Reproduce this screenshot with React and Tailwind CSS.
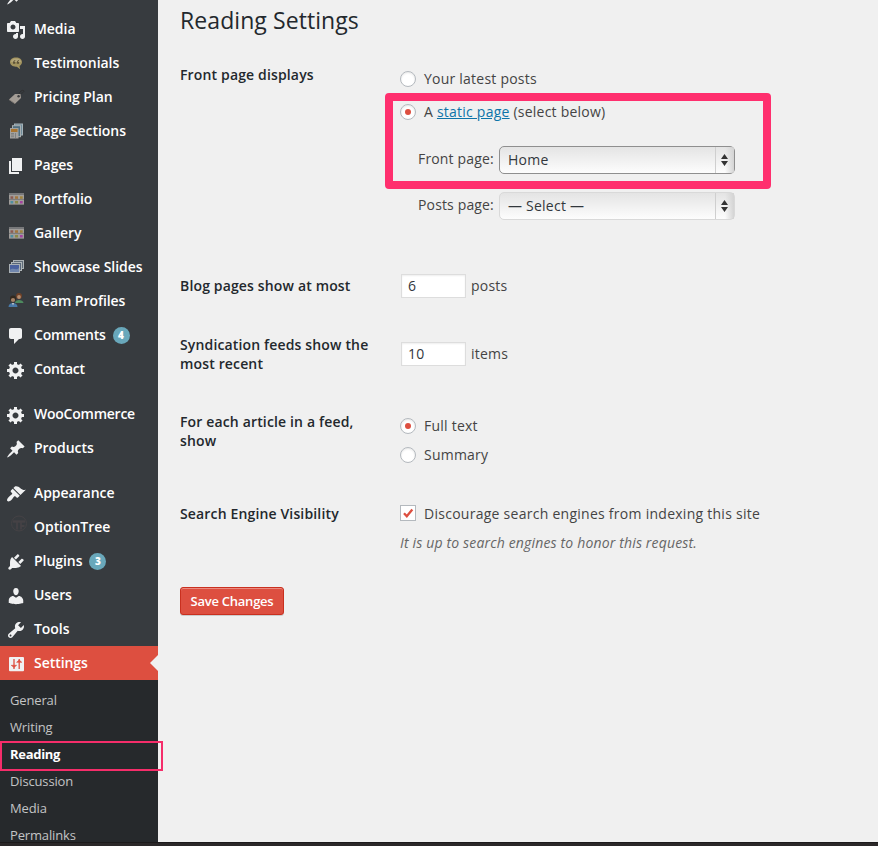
import React from "react";

const paths = {
  post: "M10.44 3.02l1.82-1.82 6.36 6.35-1.83 1.82c-1.05-.68-2.48-.57-3.41.36l-.75.75c-.92.93-1.04 2.35-.35 3.41l-1.83 1.82-2.41-2.41-2.8 2.79c-.42.42-3.38 2.71-3.8 2.29s1.86-3.39 2.28-3.81l2.79-2.79L4.1 9.36l1.83-1.82c1.05.69 2.48.57 3.4-.36l.75-.75c.93-.92 1.05-2.35.36-3.41z",
  media: "M13 11V4c0-.55-.45-1-1-1h-1.67L9 1H5L3.67 3H2c-.55 0-1 .45-1 1v7c0 .55.45 1 1 1h10c.55 0 1-.45 1-1zM7 4.5c1.38 0 2.5 1.12 2.5 2.5S8.38 9.5 7 9.5 4.5 8.38 4.5 7 5.62 4.5 7 4.5zM14 6h5v10.5c0 1.38-1.12 2.5-2.5 2.5S14 17.88 14 16.5s1.12-2.5 2.5-2.5c.17 0 .34.02.5.05V9h-3V6zm-4 8.05V13h2v3.5c0 1.38-1.12 2.5-2.5 2.5S7 17.88 7 16.5 8.12 14 9.5 14c.17 0 .34.02.5.05z",
  page: "M6 15V2h10v13H6zm-1 1h8v2H3V5h2v11z",
  comments: "M5 2h9c1.1 0 2 .9 2 2v7c0 1.1-.9 2-2 2h-1l-5 5v-5H5c-1.1 0-2-.9-2-2V4c0-1.1.9-2 2-2z",
  generic: "M18 12h-2.18c-.17.7-.44 1.35-.81 1.93l1.54 1.54-2.1 2.1-1.54-1.54c-.58.36-1.23.63-1.91.79V19H8v-2.18c-.68-.16-1.33-.43-1.91-.79l-1.54 1.54-2.12-2.12 1.54-1.54c-.36-.58-.63-1.23-.79-1.91H1V9.03h2.17c.16-.7.44-1.35.8-1.94L2.43 5.55l2.1-2.1 1.54 1.54c.58-.37 1.24-.64 1.93-.81V2h3v2.18c.68.16 1.33.43 1.91.79l1.54-1.54 2.12 2.12-1.54 1.54c.36.59.64 1.24.8 1.94H18V12zm-8.5 1.5c1.66 0 3-1.34 3-3s-1.34-3-3-3-3 1.34-3 3 1.34 3 3 3z",
  appearance: "M14.48 11.06L7.41 3.99l1.5-1.5c.5-.56 2.3-.47 3.51.32 1.21.8 1.43 1.28 2.91 2.1 1.18.64 2.45 1.26 4.45.85zm-.71.71L6.7 4.7 4.93 6.47c-.39.39-.39 1.02 0 1.41l1.06 1.06c.39.39.39 1.03 0 1.42-.6.6-1.43 1.11-2.21 1.69-.35.26-.7.53-1.01.84C1.43 14.23.4 16.08 1.4 17.07c.99 1 2.84-.03 4.18-1.36.31-.31.58-.66.85-1.02.57-.78 1.08-1.61 1.69-2.21.39-.39 1.02-.39 1.41 0l1.06 1.06c.39.39 1.02.39 1.41 0z",
  plugins: "M13.11 4.36L9.87 7.6 8 5.73l3.24-3.24c.35-.34 1.05-.2 1.56.32.52.51.66 1.21.31 1.55zm-8 1.77l.91-1.12 9.01 9.01-1.19.84c-.71.71-2.63 1.16-3.82 1.16H6.14L4.9 17.26c-.59.59-1.54.59-2.12 0-.59-.58-.59-1.53 0-2.12l1.24-1.24v-3.88c0-1.13.4-3.19 1.09-3.89zm7.26 3.97l3.24-3.24c.34-.35 1.04-.21 1.55.31.52.51.66 1.21.31 1.55l-3.24 3.25z",
  users: "M10 9.25c-2.27 0-2.73-3.44-2.73-3.44C7 4.02 7.82 2 9.97 2c2.16 0 2.98 2.02 2.71 3.81 0 0-.41 3.44-2.68 3.44zm0 2.57L12.72 10c2.39 0 4.52 2.33 4.52 4.53v2.49s-3.65 1.13-7.24 1.13c-3.65 0-7.24-1.13-7.24-1.13v-2.49c0-2.25 1.94-4.48 4.47-4.48z",
  tools: "M16.68 9.77c-1.34 1.34-3.3 1.67-4.95.99l-5.41 6.52c-.99.99-2.59.99-3.58 0s-.99-2.59 0-3.57l6.52-5.42c-.68-1.65-.35-3.61.99-4.95 1.28-1.28 3.12-1.62 4.72-1.06l-2.89 2.89 2.82 2.82 2.86-2.87c.53 1.58.18 3.39-1.08 4.65zM3.81 16.21c.4.39 1.04.39 1.43 0 .4-.4.4-1.04 0-1.43-.39-.4-1.03-.4-1.43 0-.39.39-.39 1.03 0 1.43z",
};

const drawings = {
  testimonials: (
    <g>
      <path d="M10 3.500c3.600 0 6 1.900 6 4.600 0 1.800-1 3.100-2.500 3.900l.6 3.200-3.300-2.400H10c-3.600 0-6-2-6-4.700s2.400-4.600 6-4.600z" fill="#a3945f" />
      <path d="M10 4.500c3 0 5 1.400 5 3.600H5c0-2.200 2-3.600 5-3.600z" fill="#b3a67a" />
      <path d="M9.300 6C7.500 6.500 6.900 7.600 7 9.800h2.300V8H8.300c.1-.7.400-1 1-1.200zm3.700 0c-1.800.5-2.400 1.600-2.300 3.800H13V8h-1c.1-.7.400-1 1-1.200z" fill="#5c5238" />
    </g>
  ),
  pricing: (
    <g>
      <path d="M13 6c1-3 3-4 4.500-3.500S17 5 15 5.500" fill="none" stroke="#2f3031" />
      <path d="M3 11.500L9 6h5.500l.5 4-6 5.700z" fill="#a39c95" />
      <path d="M3 11.500l6 4.200" stroke="#837c76" />
      <circle cx="12.600" cy="8.200" r="1.200" fill="#3b3c3e" />
    </g>
  ),
  sections: (
    <g>
      <rect x="8.500" y="2" width="8" height="11" fill="#6f8b99" stroke="#a5b2b8" />
      <rect x="6.500" y="3.700" width="8" height="11" fill="#4f6f80" stroke="#a9afb1" />
      <rect x="4" y="6" width="8.500" height="10.500" fill="#a3a29f" />
      <rect x="5" y="7" width="6.500" height="3" fill="#a8742f" />
      <path d="M5 11.500h3M5 13h3M5 14.700h3M9.500 11v5" stroke="#74777a" strokeWidth=".8" />
    </g>
  ),
  grid: (
    <g>
      <rect x="3" y="3" width="15" height="12" fill="#a09d9a" />
      <rect x="3" y="3" width="15" height="2" fill="#77787a" />
      <rect x="4.500" y="6.300" width="2.700" height="2.500" fill="#8c5a52" />
      <rect x="9" y="6.300" width="3" height="2.500" fill="#a3763c" />
      <rect x="14" y="6.300" width="2.700" height="2.500" fill="#a0843c" />
      <rect x="4.500" y="11" width="2.700" height="2.500" fill="#4f8fa0" />
      <rect x="9" y="11" width="3" height="2.500" fill="#8a8a48" />
      <rect x="14" y="11" width="2.700" height="2.500" fill="#a343a0" />
      <path d="M3 9.400h15M3 14.500h15" stroke="#6a6a6b" strokeWidth=".7" />
    </g>
  ),
  slides: (
    <g>
      <rect x="7.500" y="2.500" width="10" height="8" fill="#5f6b78" stroke="#aab1b5" />
      <rect x="5.500" y="4.500" width="10" height="8" fill="#58677a" stroke="#b0b6b9" />
      <rect x="3.500" y="6.500" width="10" height="8" fill="#4b62a0" stroke="#a9b0b5" />
      <path d="M4 12c3-3 6 1 9-2v4H4z" fill="#7187ae" />
    </g>
  ),
  team: (
    <g>
      <circle cx="13" cy="4" r="3" fill="#6e4128" />
      <circle cx="13" cy="5" r="1.900" fill="#b38d70" />
      <path d="M9 11c0-2 2-3 4-3s4.500 1 4.500 3z" fill="#4d8a5e" />
      <circle cx="7" cy="6.500" r="3" fill="#33291f" />
      <circle cx="7" cy="8" r="2.100" fill="#a68468" />
      <path d="M2.500 15c0-2.500 2-4 4.500-4s4.500 1.500 4.500 4z" fill="#4979a8" />
      <path d="M6 11l1 2.500L8 11z" fill="#ccc" />
    </g>
  ),
  optiontree: (
    <g fill="none" stroke="#454245">
      <circle cx="13" cy="5.500" r="7.500" strokeWidth="1" />
      <path d="M7 3.500h12" strokeWidth="2.400" />
      <path d="M11 4v7.500M15 4v7.500M15 8h3.500" strokeWidth="1.800" />
    </g>
  ),
  settings: (
    <g>
      <rect x="3" y="3" width="15" height="14.300" rx="1" fill="#f0f1f2" />
      <path d="M8 5v10M13.200 5v10" stroke="#dd4f40" strokeWidth="1.300" />
      <path d="M5.200 11.300h5.400L8 13.500zM10.600 8.300h5.200L13.200 6z" fill="#dd4f40" stroke="#dd4f40" strokeWidth=".6" />
    </g>
  ),
};

function MenuIcon({ name }) {
  return (
    <svg className="ml-1.5 mt-2 h-5 w-5 shrink-0 overflow-visible" viewBox="0 0 20 20" aria-hidden="true">
      {paths[name] ? <path d={paths[name]} fill="#f0f1f2" fillRule="evenodd" /> : drawings[name]}
    </svg>
  );
}

const tightLabels = ["Comments", "Contact", "WooCommerce"];

function MenuItem({ icon, label, count, active }) {
  return (
    <li className={active ? "relative flex h-[34px] bg-[#dd4f40]" : "flex h-[34px]"}>
      <MenuIcon name={icon} />
      <span
        className={
          "ml-2 whitespace-nowrap text-[14px] leading-[34px] font-semibold text-white " +
          (tightLabels.includes(label) ? "tracking-[-0.24px]" : "tracking-[-0.05px]")
        }
      >
        {label}
      </span>
      {count && (
        <span className="mt-[9px] ml-[7px] h-[17px] w-[17px] rounded-full bg-[#69a8bb] text-center text-[10px] leading-[17px] font-extrabold text-white">
          {count}
        </span>
      )}
      {active && (
        <span className="absolute top-[9px] right-0 border-y-8 border-r-8 border-y-transparent border-r-[#f0f0f0]" />
      )}
    </li>
  );
}

const groups = [
  [
    ["post", "Posts"],
    ["media", "Media"],
    ["testimonials", "Testimonials"],
    ["pricing", "Pricing Plan"],
    ["sections", "Page Sections"],
    ["page", "Pages"],
    ["grid", "Portfolio"],
    ["grid", "Gallery"],
    ["slides", "Showcase Slides"],
    ["team", "Team Profiles"],
    ["comments", "Comments", "4"],
    ["generic", "Contact"],
  ],
  [
    ["generic", "WooCommerce"],
    ["post", "Products"],
  ],
  [
    ["appearance", "Appearance"],
    ["optiontree", "OptionTree"],
    ["plugins", "Plugins", "3"],
    ["users", "Users"],
    ["tools", "Tools"],
    ["settings", "Settings"],
  ],
];

const submenu = ["General", "Writing", "Reading", "Discussion", "Media", "Permalinks"];

function Sidebar() {
  return (
    <nav className="h-[842px] w-[158px] shrink-0 bg-[#373b3f]">
      <div className="flex h-[842px] flex-col overflow-hidden">
        <div className="-mt-[22px] flex shrink-0 flex-col gap-[11px]">
          {groups.map((group, i) => (
            <ul key={i}>
              {group.map(([icon, label, count]) => (
                <MenuItem key={label} icon={icon} label={label} count={count} active={label === "Settings"} />
              ))}
            </ul>
          ))}
        </div>
        <ul className="shrink-0 bg-[#26292c] pt-[7px]">
          {submenu.map((label) => (
            <li
              key={label}
              className={
                label === "Reading"
                  ? "h-[27px] pl-2.5 text-[13px] leading-[27px] font-bold tracking-[-0.3px] text-white"
                  : "h-[27px] pl-2.5 text-[13px] leading-[27px] tracking-[-0.15px] text-[#c3c4c5]"
              }
            >
              {label}
            </li>
          ))}
        </ul>
      </div>
    </nav>
  );
}

function Radio({ checked }) {
  return (
    <span className="flex h-4 w-4 shrink-0 items-center justify-center rounded-full border border-[#b4b9be] bg-white shadow-[inset_0_1px_2px_rgba(0,0,0,0.1)]">
      {checked && <span className="h-1.5 w-1.5 rounded-full bg-[#dd4f40]" />}
    </span>
  );
}

function Option({ checked, children }) {
  return (
    <div className="flex h-5 items-center gap-2">
      <Radio checked={checked} />
      <span className="-mt-0.5 whitespace-nowrap">{children}</span>
    </div>
  );
}

function Select({ value, focused }) {
  return (
    <div
      className={
        focused
          ? "flex h-7 w-[236px] rounded-[5px] border border-[#8f8f8f] bg-linear-to-b from-[#e4e4e4] to-[#fdfdfd]"
          : "flex h-7 w-[236px] rounded-[5px] border border-[#d9d9d9] bg-linear-to-b from-[#e4e4e4] to-[#fdfdfd]"
      }
    >
      <span className="flex-1 pl-2 leading-[26px] text-[#32373c]">{value}</span>
      <span className="flex w-[19px] items-center justify-center border-l border-[#cfcfcf] bg-linear-to-r from-transparent via-transparent to-[#d4d4d4] pr-px">
        <svg className="h-3 w-[7px]" viewBox="0 0 7 12" aria-hidden="true">
          <path d="M3.500 0L7 5H0zM3.500 12L7 7H0z" fill="#333" />
        </svg>
      </span>
    </div>
  );
}

function Row({ label, className, children }) {
  return (
    <div className={"flex " + className}>
      <div className="w-[220px] shrink-0 pr-6 text-[14px] leading-[18.500px] font-semibold tracking-[0.15px] text-[#23282d]">{label}</div>
      <div className="flex flex-1 flex-col">{children}</div>
    </div>
  );
}

function NumberField({ value, unit }) {
  return (
    <div className="flex h-6 items-center">
      <span className="ml-px h-6 w-[65px] border border-[#ddd] bg-white pl-1.5 leading-[22px] text-[#32373c] shadow-[inset_0_1px_2px_rgba(0,0,0,0.07)]">
        {value}
      </span>
      <span className="-mt-0.5 ml-[5px]">{unit}</span>
    </div>
  );
}

export default function App() {
  return (
    <div className="relative h-[846px] w-[878px] overflow-hidden bg-[#f0f0f0] font-['Open_Sans',sans-serif] text-[14px] text-[#444]">
      <div className="flex">
        <Sidebar />
        <main className="flex h-[842px] flex-1 flex-col pl-[22px] tracking-[0.23px]">
          <h1 className="mt-[3px] h-[34px] text-[23px] leading-[34px] font-normal tracking-[0.08px] text-[#23282d]">Reading Settings</h1>

          <Row className="mt-[29px] h-[211px]" label="Front page displays">
            <div className="mt-[3px] flex flex-col gap-[13px]">
              <Option>Your latest posts</Option>
              <Option checked>
                A <a className="text-[#0e74a8] underline">static page</a> (select below)
              </Option>
            </div>
            <div className="mt-[24px] ml-[18px] flex flex-col gap-[18px]">
              <div className="flex items-center">
                <span className="-mt-[3px] w-[81px] tracking-[0.15px]">Front page:</span>
                <Select value="Home" focused />
              </div>
              <div className="flex items-center">
                <span className="-mt-[3px] w-[81px] tracking-[0.15px]">Posts page:</span>
                <Select value="— Select —" />
              </div>
            </div>
          </Row>

          <Row className="h-[59px]" label="Blog pages show at most">
            <div className="-mt-[3px]">
              <NumberField value="6" unit="posts" />
            </div>
          </Row>

          <Row className="h-[77px]" label="Syndication feeds show the most recent">
            <div className="mt-[6px]">
              <NumberField value="10" unit="items" />
            </div>
          </Row>

          <Row className="h-[92px]" label="For each article in a feed, show">
            <div className="mt-[3px] flex flex-col gap-[9px]">
              <Option checked>Full text</Option>
              <Option>Summary</Option>
            </div>
          </Row>

          <Row className="h-[82px]" label="Search Engine Visibility">
            <div className="-mt-0.5 flex h-5 items-center gap-2">
              <span className="flex h-4 w-4 items-center justify-center border border-[#b4b9be] bg-white">
                <svg className="h-3 w-3" viewBox="0 0 12 12" aria-hidden="true">
                  <path d="M2 6.200l2.800 3L10.300 2.500" fill="none" stroke="#dd4f40" strokeWidth="2.300" />
                </svg>
              </span>
              <span className="tracking-[0.265px]">Discourage search engines from indexing this site</span>
            </div>
            <p className="mt-[10px] leading-5 tracking-[0.16px] text-[#666] italic">It is up to search engines to honor this request.</p>
          </Row>

          <button className="h-7 w-[104px] rounded-[3px] border border-[#c9301f] bg-[#dd4f40] text-[13px] leading-[26px] font-semibold tracking-[-0.25px] text-white shadow-[inset_0_1px_0_#ec8a80,0_1px_0_rgba(0,0,0,0.15)]">
            Save Changes
          </button>
        </main>
      </div>
      <div className="h-1 border-t border-[#1d1b1c] bg-[#2b2829]" />

      <div className="absolute top-[93px] left-[385px] h-24 w-[386px] rounded-[4px] border-8 border-[#ff2f6e]" />
      <div className="absolute top-[741px] left-0 h-[30px] w-[163px] border-2 border-[#f52d6a]" />
    </div>
  );
}
